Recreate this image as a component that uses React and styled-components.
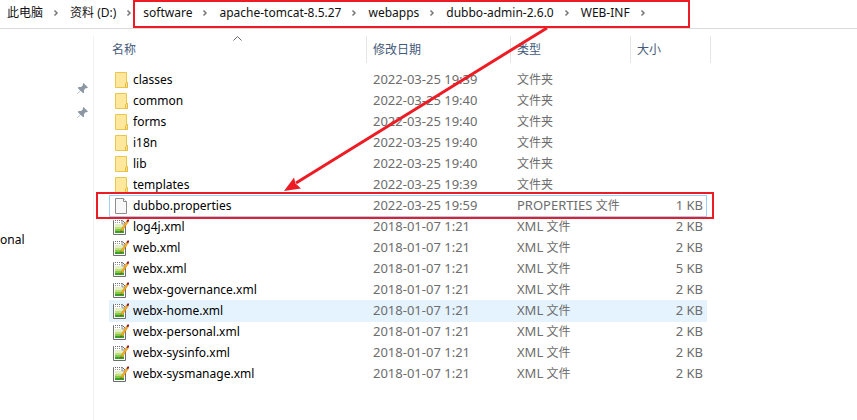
import React from "react";
import styled, { createGlobalStyle, css } from "styled-components";

const RED = "#ed1c24";

const GlobalStyle = createGlobalStyle`
  * { box-sizing: border-box; }
  body {
    margin: 0;
    background: #fff;
    color: #000;
    font: 12px/20px "Noto Sans", "Noto Sans CJK SC", sans-serif;
  }
`;

const Window = styled.div`
  position: relative;
  display: flex;
  flex-direction: column;
  min-height: 100vh;
  overflow: hidden;
`;

const AddressBar = styled.nav`
  display: flex;
  align-items: center;
  height: 29px;
  padding: 0 7px 2px;
  border-bottom: 1px solid #d9d9d9;
  white-space: nowrap;
`;

const Crumb = styled.a`
  color: #111;
  text-decoration: none;
`;

const CrumbArrow = styled.svg`
  flex: none;
  width: 27px;
  height: 8px;
  fill: none;
  stroke: #777;
  stroke-width: 1.5;
`;

const Body = styled.div`
  display: flex;
  flex: 1;
`;

const Sidebar = styled.aside`
  display: flex;
  flex-direction: column;
  flex: none;
  width: 94px;
  margin-top: 7px;
  padding-top: 40px;
  border-right: 1px solid #f2f2f2;
`;

const PinRow = styled.div`
  display: flex;
  align-items: center;
  justify-content: flex-end;
  height: 24px;
  padding-right: 4px;
`;

const SidebarLabel = styled.div`
  margin-top: 105px;
  line-height: 21px;
`;

const Content = styled.main`
  flex: 1;
  min-width: 0;
  padding: 7px 0 0 15px;
`;

const FileTable = styled.table`
  table-layout: fixed;
  width: 602px;
  border-spacing: 0;
  white-space: nowrap;
`;

const Col = styled.col`
  width: ${(p) => p.$w}px;
`;

const HeadCell = styled.th`
  position: relative;
  height: 27px;
  padding: 0;
  border-right: 1px solid #e5e5e5;
  text-align: left;
`;

const SortButton = styled.button`
  display: block;
  width: 100%;
  padding: 0 0 0 ${(p) => (p.$first ? 3 : 6)}px;
  border: 0;
  background: none;
  color: #44597a;
  font: inherit;
  font-weight: 400;
  text-align: left;
`;

const SortMark = styled.svg`
  position: absolute;
  top: 0;
  left: 50%;
  width: 9px;
  height: 5px;
  margin-left: -5px;
  fill: none;
  stroke: #666;
`;

const Rows = styled.tbody`
  &::before {
    content: "";
    display: block;
    height: 6px;
  }
`;

const BLUE = "#99d1ff";

const Cell = styled.td`
  height: 21px;
  padding: 0 4px 0 6px;
  line-height: 21px;
  color: #6d6d6d;
  text-align: ${(p) => (p.$end ? "right" : "left")};
`;

const NameCell = styled(Cell)`
  padding-left: 4px;
  color: #000;
`;

const NameLayout = styled.div`
  display: flex;
  align-items: center;
  gap: 4px;
  height: 21px;
`;

const Row = styled.tr`
  ${(p) =>
    p.$state === "hover" &&
    css`
      ${Cell} {
        background: #e5f3ff;
        box-shadow: 0 1px 0 #e5f3ff;
      }
    `}
  ${(p) =>
    p.$state === "focus" &&
    css`
      ${Cell} {
        box-shadow: inset 0 1px 0 ${BLUE}, 0 1px 0 ${BLUE};
      }
      ${Cell}:first-child {
        box-shadow: inset 1px 1px 0 ${BLUE}, 0 1px 0 ${BLUE};
      }
      ${Cell}:last-child {
        box-shadow: inset -1px 1px 0 ${BLUE}, 0 1px 0 ${BLUE};
      }
    `}
`;

const Latin = styled.span`
  font-size: 13px;
`;

const Icon = styled.svg`
  flex: none;
  width: 16px;
  height: 16px;
`;

const Frame = styled.div`
  position: absolute;
  top: ${(p) => p.$y}px;
  left: ${(p) => p.$x}px;
  width: ${(p) => p.$w}px;
  height: ${(p) => p.$h}px;
  border: 2px solid ${RED};
  pointer-events: none;
`;

const Pointer = styled.svg`
  position: absolute;
  top: 28px;
  left: 284px;
  width: 264px;
  height: 163px;
  pointer-events: none;
`;

function FolderIcon() {
  return (
    <Icon viewBox="0 0 16 16" aria-hidden="true">
      <path d="M2.5.5h11v10h1v5h-12z" fill="#ffe79b" stroke="#ebc64e" />
      <path d="M12.5 15.5v-4l1-1h1v5z" fill="#ffe08a" stroke="#e5bd42" />
    </Icon>
  );
}

function BlankIcon() {
  return (
    <Icon viewBox="0 0 16 16" aria-hidden="true">
      <path d="M2.5.5h8l3 3v12h-11z" fill="#f8f8f8" stroke="#8c8c8c" />
      <path d="M10.5.5v3h3" fill="#fff" stroke="#8c8c8c" />
    </Icon>
  );
}

function XmlIcon() {
  return (
    <Icon viewBox="0 0 16 16" aria-hidden="true">
      <path d="M.5 1.5h9l3 3v11H.5z" fill="#fff" stroke="#6b6d70" />
      <g shapeRendering="crispEdges">
        <path d="M2 5h7v1h2v2H2z" fill="#e3efc4" />
        <path d="M2 8h9v2H2z" fill="#bfe07a" />
        <path d="M2 10h9v2H2z" fill="#84cb45" />
        <path d="M2 12h9v2H2z" fill="#3d9e2b" />
      </g>
      <path d="M1 1.5h8" stroke="#fff" strokeDasharray="1 1" />
      <path d="M2 3.500h6" stroke="#999" strokeDasharray="1 1" />
      <path d="M9 1.500V5h3.500" fill="none" stroke="#8a8c8e" />
      <path d="M7.700 12.500l.8-2.500 5.200-8 1.500 1-5.200 8z" fill="#fbb021" stroke="#c77f12" strokeWidth=".5" />
      <path d="M7.500 13.300l.4-1.700 1 .7z" fill="#443322" />
      <path d="M13.500 2.200l1-1.700H16V2l-.9 1.200z" fill="#8e1722" />
    </Icon>
  );
}

function PinIcon() {
  return (
    <svg width="13" height="13" viewBox="0 0 13 13" aria-hidden="true">
      <path
        d="M7.500 1L12 5.500l-1.200.8-1-.2-1.800 2 .1 2.400-1 .8-2.500-2.500L1 12.200.8 12l3.400-3.600L1.700 6l.9-1 2.400.1 2-1.800L6.700 2z"
        fill="#8b98a3"
      />
    </svg>
  );
}

const icons = { folder: FolderIcon, blank: BlankIcon, xml: XmlIcon };

const crumbs = [
  "此电脑",
  "资料 (D:)",
  "software",
  "apache-tomcat-8.5.27",
  "webapps",
  "dubbo-admin-2.6.0",
  "WEB-INF",
];

const folder = (name, time) => ({
  name, icon: "folder", date: "2022-03-25 " + time, kind: "", type: "文件夹", size: "",
});
const xml = (name, size = "2 KB", state) => ({
  name, icon: "xml", date: "2018-01-07 1:21", kind: "XML ", type: "文件", size, state,
});

const files = [
  folder("classes", "19:39"),
  folder("common", "19:40"),
  folder("forms", "19:40"),
  folder("i18n", "19:40"),
  folder("lib", "19:40"),
  folder("templates", "19:39"),
  {
    name: "dubbo.properties", icon: "blank", date: "2022-03-25 19:59",
    kind: "PROPERTIES ", type: "文件", size: "1 KB", state: "focus",
  },
  xml("log4j.xml"),
  xml("web.xml"),
  xml("webx.xml", "5 KB"),
  xml("webx-governance.xml"),
  xml("webx-home.xml", "2 KB", "hover"),
  xml("webx-personal.xml"),
  xml("webx-sysinfo.xml"),
  xml("webx-sysmanage.xml"),
];

function FileRow({ file }) {
  const Glyph = icons[file.icon];
  return (
    <Row $state={file.state}>
      <NameCell>
        <NameLayout>
          <Glyph />
          {file.name}
        </NameLayout>
      </NameCell>
      <Cell>
        <Latin>{file.date}</Latin>
      </Cell>
      <Cell>
        <Latin>{file.kind}</Latin>
        {file.type}
      </Cell>
      <Cell $end>
        <Latin>{file.size}</Latin>
      </Cell>
    </Row>
  );
}

export default function App() {
  return (
    <Window>
      <GlobalStyle />
      <AddressBar aria-label="Path">
        {crumbs.map((label) => (
          <React.Fragment key={label}>
            <Crumb href="#">{label}</Crumb>
            <CrumbArrow viewBox="0 0 27 8" aria-hidden="true">
              <path d="M11.500 1.500L14 4l-2.500 2.500" />
            </CrumbArrow>
          </React.Fragment>
        ))}
      </AddressBar>
      <Body>
        <Sidebar>
          <PinRow><PinIcon /></PinRow>
          <PinRow><PinIcon /></PinRow>
          <SidebarLabel>onal</SidebarLabel>
        </Sidebar>
        <Content>
          <FileTable>
            <colgroup>
              <Col $w={258} />
              <Col $w={144} />
              <Col $w={120} />
              <Col $w={76} />
              <Col $w={4} />
            </colgroup>
            <thead>
              <tr>
                <HeadCell aria-sort="ascending">
                  <SortButton $first>名称</SortButton>
                  <SortMark viewBox="0 0 9 5" aria-hidden="true">
                    <path d="M.5 4.500l4-4 4 4" />
                  </SortMark>
                </HeadCell>
                <HeadCell><SortButton>修改日期</SortButton></HeadCell>
                <HeadCell><SortButton>类型</SortButton></HeadCell>
                <HeadCell colSpan={2}><SortButton>大小</SortButton></HeadCell>
              </tr>
            </thead>
            <Rows>
              {files.map((file) => (
                <FileRow key={file.name} file={file} />
              ))}
            </Rows>
          </FileTable>
        </Content>
      </Body>
      <Frame $x={133} $y={0} $w={557} $h={28} />
      <Frame $x={96} $y={192} $w={618} $h={27} />
      <Pointer viewBox="0 0 264 163" aria-hidden="true">
        <path d="M263 0L12 155" stroke={RED} strokeWidth="3" />
        <path d="M0 163L10 149.500l1.500 6 5.500 5z" fill={RED} />
      </Pointer>
    </Window>
  );
}
